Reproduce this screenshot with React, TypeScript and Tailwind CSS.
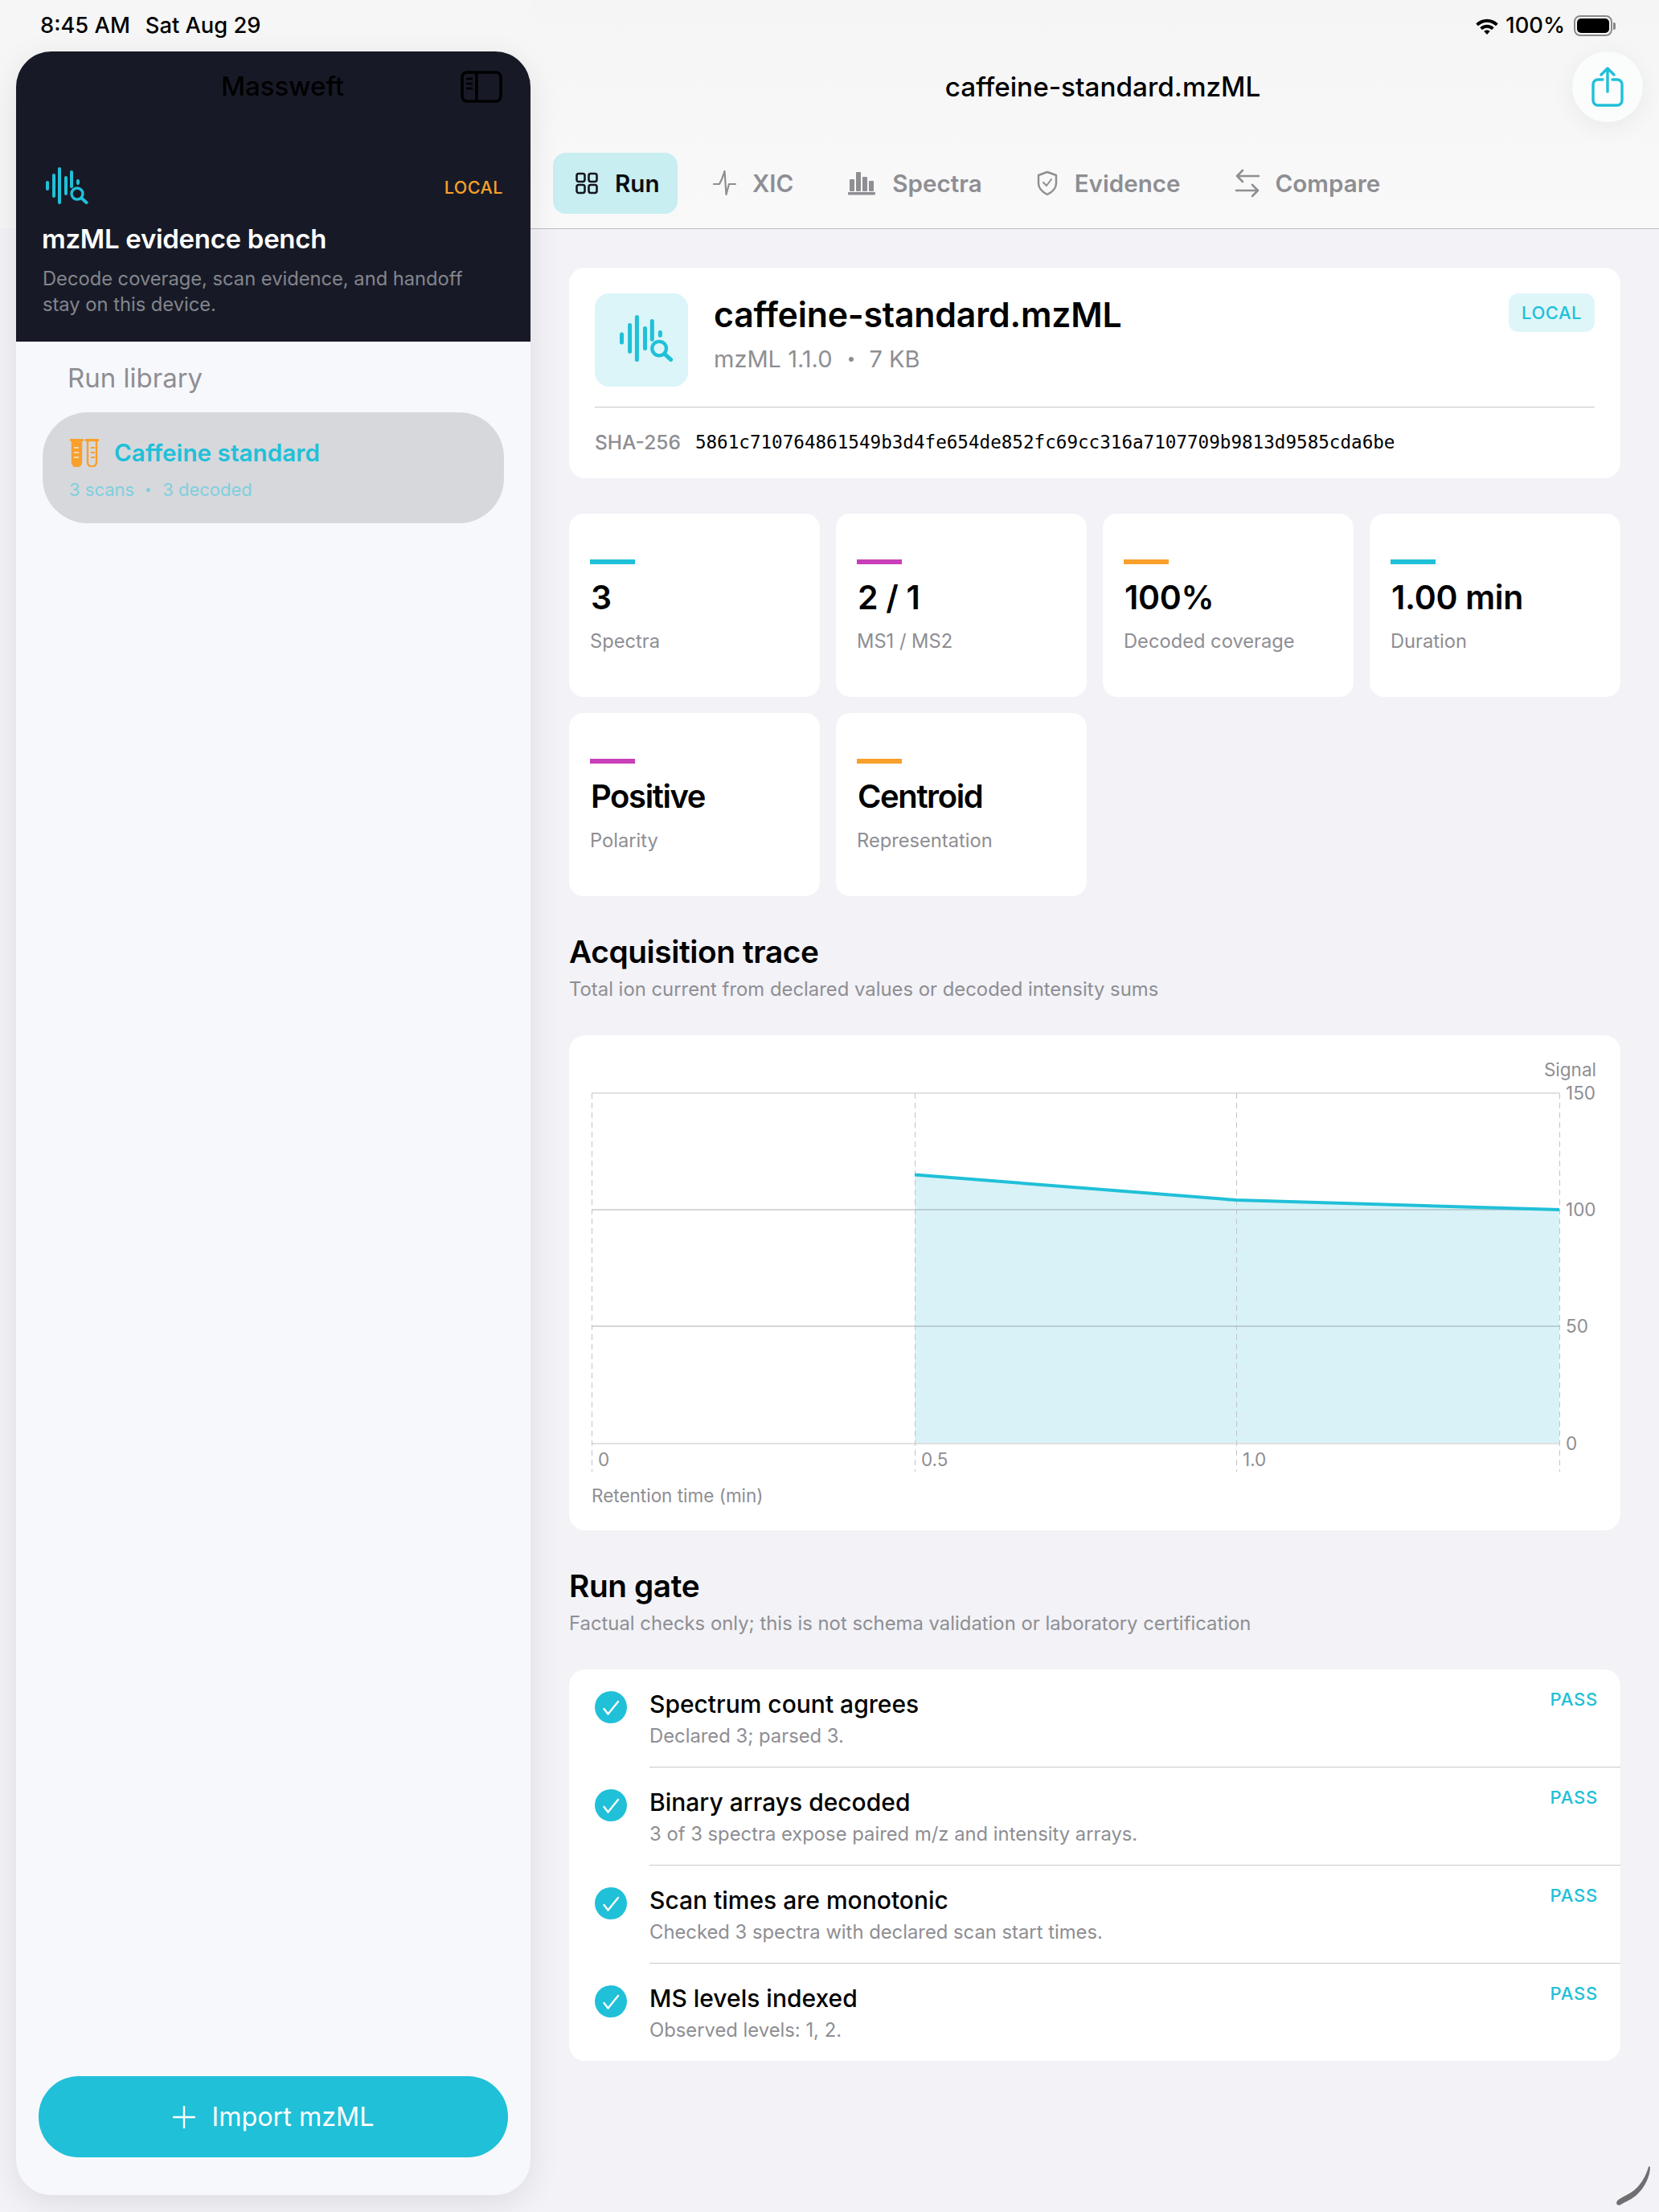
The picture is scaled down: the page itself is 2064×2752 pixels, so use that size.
import type { ReactNode } from 'react'

const cyan = '#20c0d8'

function MassLogo({ className, color = cyan }: { className?: string; color?: string }) {
  return (
    <svg viewBox="0 0 54 46" className={className} fill="none" stroke={color} strokeLinecap="round">
      <path d="M2 19v8M10 10v26M17 2v42M25 13v20M32 6v18M40 17v3" strokeWidth="4" />
      <circle cx="39" cy="33" r="7" strokeWidth="3.4" />
      <path d="M44.500 38.500l6 5.500" strokeWidth="4" />
    </svg>
  )
}

function TubesIcon() {
  return (
    <svg viewBox="0 0 36 36" className="w-[36px] h-[36px]" fill="none" stroke="#f8a02c">
      <path d="M1 2.500h15M20 2.500h15" strokeWidth="3" strokeLinecap="round" />
      <path d="M3 3h11v27a5.500 5.500 0 0 1-11 0z" fill="#f8a02c" strokeWidth="2.400" />
      <path d="M22 3h11v27a5.500 5.500 0 0 1-11 0z" strokeWidth="2.400" />
      <path d="M5 12h6M5 18h6M5 24h6" stroke="#f6d9ae" strokeWidth="2" />
      <path d="M26 12h5M26 18h5M26 24h5" strokeWidth="2" />
    </svg>
  )
}

function RunIcon() {
  return (
    <svg viewBox="0 0 28 28" className="w-[28px] h-[28px]" fill="none" stroke="#15171f" strokeWidth="2.600">
      <rect x="1.500" y="2" width="10" height="10" rx="2.400" />
      <rect x="16.500" y="2" width="10" height="10" rx="2.400" />
      <rect x="1.500" y="16" width="10" height="10" rx="2.400" />
      <rect x="16.500" y="16" width="10" height="10" rx="2.400" />
    </svg>
  )
}

function XicIcon() {
  return (
    <svg viewBox="0 0 30 32" className="w-[30px] h-[32px]" fill="none" stroke="#8e8e93" strokeWidth="2.200" strokeLinecap="round" strokeLinejoin="round">
      <path d="M1 17h7l3-6 3.500-10 2 29 3.500-13h8" />
    </svg>
  )
}

function SpectraIcon() {
  return (
    <svg viewBox="0 0 34 32" className="w-[34px] h-[32px]" fill="#8e8e93">
      <rect x="2" y="11" width="6" height="15" rx="1" />
      <rect x="10" y="2" width="6" height="24" rx="1" />
      <rect x="18" y="8" width="6" height="18" rx="1" />
      <rect x="26" y="13" width="6" height="13" rx="1" />
      <rect x="0" y="27" width="34" height="3.400" rx="0.800" />
    </svg>
  )
}

function ShieldIcon() {
  return (
    <svg viewBox="0 0 28 32" className="w-[28px] h-[32px]" fill="none" stroke="#8e8e93" strokeWidth="2.400" strokeLinecap="round" strokeLinejoin="round">
      <path d="M14 2l11 4v10c0 7-5 11-11 14C8 27 3 23 3 16V6z" />
      <path d="M9 15l4 4 6-8" strokeWidth="2" />
    </svg>
  )
}

function CompareIcon() {
  return (
    <svg viewBox="0 0 32 36" className="w-[32px] h-[36px]" fill="none" stroke="#8e8e93" strokeWidth="2.600" strokeLinecap="round" strokeLinejoin="round">
      <path d="M30 9H3M10 2L3 9l7 7" />
      <path d="M2 27h27M22 20l7 7-7 7" />
    </svg>
  )
}

function Tab({ icon, label, active, className }: { icon: ReactNode; label: string; active?: boolean; className?: string }) {
  return (
    <div className={`flex items-center h-[76px] rounded-[16px] ${active ? 'bg-[#c8eef1] text-[#0c0d12]' : 'text-[#8e8e93]'} ${className ?? ''}`}>
      {icon}
      <span className="text-[29.6px] leading-[40px] font-semibold">{label}</span>
    </div>
  )
}

function Stat({ value, label, color, word }: { value: string; label: string; color: string; word?: boolean }) {
  return (
    <div className="h-[228px] rounded-[18px] bg-white pl-[26px] pt-[57px]">
      <div className={`w-[56px] h-[6px] ${color}`} />
      <div className={`mt-[17px] ml-[1px] leading-[48px] font-semibold text-black ${word ? 'text-[40px] tracking-[-1.4px]' : 'text-[41px] tracking-[-0.3px]'}`}>{value}</div>
      <div className="mt-[15px] text-[23.7px] leading-[32px] text-[#8e8e93]">{label}</div>
    </div>
  )
}

function SectionHeading({ title, sub }: { title: string; sub: string }) {
  return (
    <div>
      <h2 className="text-[38.8px] leading-[52px] font-semibold tracking-[-0.4px] text-black">{title}</h2>
      <p className="mt-[5px] text-[23.85px] leading-[32px] text-[#8e8e93]">{sub}</p>
    </div>
  )
}

function Chart() {
  const vx = [0.5, 402.5, 802.5, 1204.5]
  const hy = [10, 155, 300, 446]
  return (
    <svg viewBox="0 -5 1254 491" className="w-[1254px] h-[491px] block">
      <polygon points="402,111.500 802,143 1204,155 1204,446 402,446" fill="#d8f2f7" />
      {hy.map((y, i) => (
        <line key={y} x1="0" x2="1204" y1={y} y2={y} stroke={i === 0 || i === 3 ? '#e0e0e2' : '#c8c8ca'} strokeWidth={i === 0 || i === 3 ? 2 : 1.5} />
      ))}
      <line x1="402" x2="1204" y1="155" y2="155" stroke="#b3cdd2" strokeWidth="1.500" />
      <line x1="402" x2="1204" y1="300" y2="300" stroke="#b3cdd2" strokeWidth="1.500" />
      {vx.map((x) => (
        <line key={x} x1={x} x2={x} y1="10" y2="481" stroke="#c4c4c6" strokeWidth="1" strokeDasharray="7 5" />
      ))}
      <polyline points="402,111.500 802,143 1204,155" fill="none" stroke={cyan} strokeWidth="4" />
      <g fill="#8e8e93" fontSize="22.500" fontFamily="Inter, sans-serif">
        <text x="1212" y="18">150</text>
        <text x="1212" y="163">100</text>
        <text x="1212" y="308">50</text>
        <text x="1212" y="454">0</text>
        <text x="8" y="474">0</text>
        <text x="410" y="474">0.5</text>
        <text x="810" y="474">1.0</text>
      </g>
    </svg>
  )
}

function GateRow({ title, sub, last }: { title: string; sub: string; last?: boolean }) {
  return (
    <div className="flex pl-[32px]">
      <div className="mt-[27px] w-[40px] h-[40px] shrink-0 rounded-full bg-[#20c0d8]">
        <svg viewBox="0 0 40 40" className="w-[40px] h-[40px]" fill="none" stroke="#fff" strokeWidth="2.400" strokeLinecap="round" strokeLinejoin="round">
          <path d="M11.500 22l5 6.500L29 13" />
        </svg>
      </div>
      <div className={`ml-[28px] flex-1 flex justify-between pt-[23px] pr-[28px] ${last ? 'h-[121px]' : 'h-[122px] border-b-[1.5px] border-[#c9c9cc]'}`}>
        <div>
          <div className="text-[30px] leading-[40px] font-medium text-black">{title}</div>
          <div className="mt-[4px] text-[23.8px] leading-[32px] text-[#8e8e93]">{sub}</div>
        </div>
        <div className="text-[22px] leading-[28px] font-medium tracking-[0.8px] text-[#20c0d8]">PASS</div>
      </div>
    </div>
  )
}

export default function App() {
  return (
    <div className="relative flex w-[2064px] h-[2752px] overflow-hidden bg-[#f2f2f7] text-black font-['Inter',sans-serif]">
      {/* status bar sits above everything */}
      <div className="absolute z-20 left-[50px] right-[54px] top-[14px] h-[36px] flex items-center justify-between text-[27.3px] leading-[36px] font-medium">
        <div className="flex gap-[19px]">
          <span>8:45 AM</span>
          <span>Sat Aug 29</span>
        </div>
        <div className="flex items-center">
          <svg viewBox="0 0 32 24" className="w-[30px] h-[22px]" fill="#000">
            <path d="M16 3C10 3 5 5.400 1 9.200l3 3.200C7.400 9.200 11.400 7.400 16 7.400s8.600 1.800 12 5l3-3.200C27 5.400 22 3 16 3z" />
            <path d="M16 10.500c-3.800 0-7 1.500-9.500 3.900l3 3.200c1.700-1.600 4-2.700 6.500-2.700s4.800 1.100 6.500 2.700l3-3.200c-2.500-2.400-5.700-3.900-9.500-3.900z" />
            <path d="M16 18c-1.700 0-3 .6-4 1.600l4 4.400 4-4.400c-1-1-2.300-1.600-4-1.600z" />
          </svg>
          <span className="ml-[8px]">100%</span>
          <div className="ml-[11px] flex items-center">
            <div className="w-[48px] h-[26px] rounded-[8px] border-[2px] border-[#8a8a8a] p-[2px]">
              <div className="w-full h-full rounded-[5px] bg-black" />
            </div>
            <div className="ml-[1px] w-[3px] h-[9px] rounded-r-[2px] bg-[#8a8a8a]" />
          </div>
        </div>
      </div>

      {/* left column */}
      <div className="relative z-10 w-[660px] shrink-0 pl-[20px] pt-[64px] pb-[21px] bg-[linear-gradient(#f6f6f6_284px,#f2f2f7_284px)]">
        <aside className="w-[640px] h-full rounded-[44px] overflow-hidden bg-[#f7f8fc] flex flex-col shadow-[0_10px_40px_rgba(0,0,0,0.09)]">
          <div className="h-[361px] bg-[#171a26] pl-[33px] pr-[34px]">
            <div className="relative h-[86px] flex items-center justify-center">
              <span className="pl-[24px] text-[33px] leading-[44px] font-medium text-black">Massweft</span>
              <svg viewBox="0 0 52 40" className="absolute right-[1px] top-[24px] w-[52px] h-[40px]" fill="none" stroke="#000" strokeWidth="3.600">
                <rect x="2" y="2" width="48" height="36" rx="6" />
                <path d="M20 2v36" />
                <path d="M7 10h8M7 16h8M7 22h8" strokeWidth="2.600" />
              </svg>
            </div>
            <div className="mt-[58px] flex items-center justify-between">
              <MassLogo className="ml-[4px] w-[54px] h-[46px]" />
              <span className="mt-[4px] text-[21.5px] leading-[28px] font-medium tracking-[0.5px] text-[#f8a02c]">LOCAL</span>
            </div>
            <h1 className="mt-[20px] -ml-[1px] text-[33px] leading-[46px] font-semibold tracking-[-0.3px] text-white">mzML evidence bench</h1>
            <p className="mt-[11px] text-[23.7px] leading-[32px] text-[#84858d]">
              Decode coverage, scan evidence, and handoff
              <br />
              stay on this device.
            </p>
          </div>
          <div className="flex-1 flex flex-col px-[33px]">
            <div className="mt-[23px] ml-[31px] text-[33px] leading-[44px] text-[#8e8e93]">Run library</div>
            <div className="mt-[21px] h-[138px] rounded-[56px] bg-[#d7d8dc] pl-[34px] pt-[30px]">
              <div className="flex items-center gap-[19px]">
                <TubesIcon />
                <span className="text-[29.7px] leading-[40px] font-semibold text-[#20c0d8]">Caffeine standard</span>
              </div>
              <div className="mt-[11px] -ml-[1px] flex items-center text-[22px] leading-[30px] text-[#7fcfde]">
                <span>3 scans</span>
                <span className="mx-[15px] w-[5px] h-[5px] rounded-full bg-[#7fcfde]" />
                <span>3 decoded</span>
              </div>
            </div>
            <div className="mt-auto mb-[47px] -mx-[5px] h-[101px] rounded-[50px] bg-[#20c0d8] flex items-center justify-center gap-[21px] text-white">
              <svg viewBox="0 0 28 28" className="w-[28px] h-[28px]" fill="none" stroke="#fff" strokeWidth="2.400" strokeLinecap="round">
                <path d="M14 1v26M1 14h26" />
              </svg>
              <span className="text-[32.3px] leading-[44px]">Import mzML</span>
            </div>
          </div>
        </aside>
      </div>

      {/* detail pane */}
      <main className="flex-1 min-w-0">
        <header className="relative h-[285px] bg-[linear-gradient(#f5f5f5,#f9f9f9)] border-b-[1.5px] border-[#bdbdc0]">
          <div className="absolute top-[86px] left-[20px] right-0 text-center text-[33.3px] leading-[44px] font-medium text-black">caffeine-standard.mzML</div>
          <div className="absolute top-[64px] right-[20px] w-[88px] h-[88px] rounded-full bg-[#fbfcfc] shadow-[0_6px_30px_rgba(0,0,0,0.06)] flex items-center justify-center">
            <svg viewBox="0 0 40 50" className="w-[40px] h-[50px]" fill="none" stroke={cyan} strokeWidth="3.400" strokeLinecap="round" strokeLinejoin="round">
              <path d="M20 31V3M12 10l8-8 8 8" />
              <path d="M14 16H8a6 6 0 0 0-6 6v20a6 6 0 0 0 6 6h24a6 6 0 0 0 6-6V22a6 6 0 0 0-6-6h-6" />
            </svg>
          </div>
          <nav className="absolute top-[190px] left-[28px] flex items-center">
            <Tab active icon={<RunIcon />} label="Run" className="w-[155px] pl-[28px] gap-[21px]" />
            <Tab icon={<XicIcon />} label="XIC" className="ml-[44px] gap-[19px]" />
            <Tab icon={<SpectraIcon />} label="Spectra" className="ml-[68px] gap-[21px]" />
            <Tab icon={<ShieldIcon />} label="Evidence" className="ml-[67px] gap-[20px]" />
            <Tab icon={<CompareIcon />} label="Compare" className="ml-[67px] gap-[19px]" />
          </nav>
        </header>

        <div className="px-[48px] pt-[48px]">
          <section className="h-[262px] rounded-[20px] bg-white px-[32px] pt-[32px]">
            <div className="flex h-[142px] border-b-[1.5px] border-[#c9c9cc]">
              <div className="w-[116px] h-[116px] rounded-[18px] bg-[#dbf5f8] flex items-center justify-center">
                <MassLogo className="ml-[14px] mb-[4px] w-[68px] h-[58px]" />
              </div>
              <div className="ml-[32px] flex-1">
                <div className="mt-[1px] text-[42.8px] leading-[52px] font-semibold tracking-[-0.2px] text-black">caffeine-standard.mzML</div>
                <div className="mt-[10px] flex items-center text-[29px] leading-[38px] text-[#8e8e93]">
                  <span>mzML 1.1.0</span>
                  <span className="mx-[20px] w-[6px] h-[6px] rounded-full bg-[#8e8e93]" />
                  <span>7 KB</span>
                </div>
              </div>
              <div className="w-[107px] h-[48px] rounded-[12px] bg-[#dff6f9] flex items-center justify-center text-[22px] font-medium tracking-[0.5px] text-[#20c0d8]">LOCAL</div>
            </div>
            <div className="mt-[27px] flex items-center">
              <span className="text-[24.5px] leading-[32px] font-medium text-[#8e8e93]">SHA-256</span>
              <span className="ml-[18px] text-[22.6px] leading-[32px] text-black font-['DejaVu_Sans_Mono',monospace]">5861c710764861549b3d4fe654de852fc69cc316a7107709b9813d9585cda6be</span>
            </div>
          </section>

          <section className="mt-[44px] grid grid-cols-4 gap-[20px]">
            <Stat value="3" label="Spectra" color="bg-[#20c0d8]" />
            <Stat value="2 / 1" label="MS1 / MS2" color="bg-[#c83fb8]" />
            <Stat value="100%" label="Decoded coverage" color="bg-[#f8a02c]" />
            <Stat value="1.00 min" label="Duration" color="bg-[#20c0d8]" />
            <Stat value="Positive" label="Polarity" color="bg-[#c83fb8]" word />
            <Stat value="Centroid" label="Representation" color="bg-[#f8a02c]" word />
          </section>

          <div className="mt-[43px]">
            <SectionHeading title="Acquisition trace" sub="Total ion current from declared values or decoded intensity sums" />
          </div>

          <section className="mt-[41px] h-[616px] rounded-[20px] bg-white pl-[28px] pr-[26px] pt-[29px]">
            <div className="pr-[4px] text-right text-[22.5px] leading-[28px] text-[#8e8e93]">Signal</div>
            <Chart />
            <div className="mt-[10px] text-[22.5px] leading-[30px] text-[#8e8e93]">Retention time (min)</div>
          </section>

          <div className="mt-[43px]">
            <SectionHeading title="Run gate" sub="Factual checks only; this is not schema validation or laboratory certification" />
          </div>

          <section className="mt-[41px] rounded-[20px] bg-white overflow-hidden">
            <GateRow title="Spectrum count agrees" sub="Declared 3; parsed 3." />
            <GateRow title="Binary arrays decoded" sub="3 of 3 spectra expose paired m/z and intensity arrays." />
            <GateRow title="Scan times are monotonic" sub="Checked 3 spectra with declared scan start times." />
            <GateRow title="MS levels indexed" sub="Observed levels: 1, 2." last />
          </section>
        </div>
      </main>

      {/* pencil scribble over the corner */}
      <svg viewBox="0 0 46 50" className="absolute z-20 left-[2009px] top-[2695px] w-[46px] h-[50px]" fill="#6f6f72">
        <path d="M44 0.500C44 13 37 26 29 34C22 41 14 44 7 48C3 50 0 46 4 42C11 37 18 35 24 30C33 22 39 12 42 0.500Z" />
      </svg>
    </div>
  )
}
